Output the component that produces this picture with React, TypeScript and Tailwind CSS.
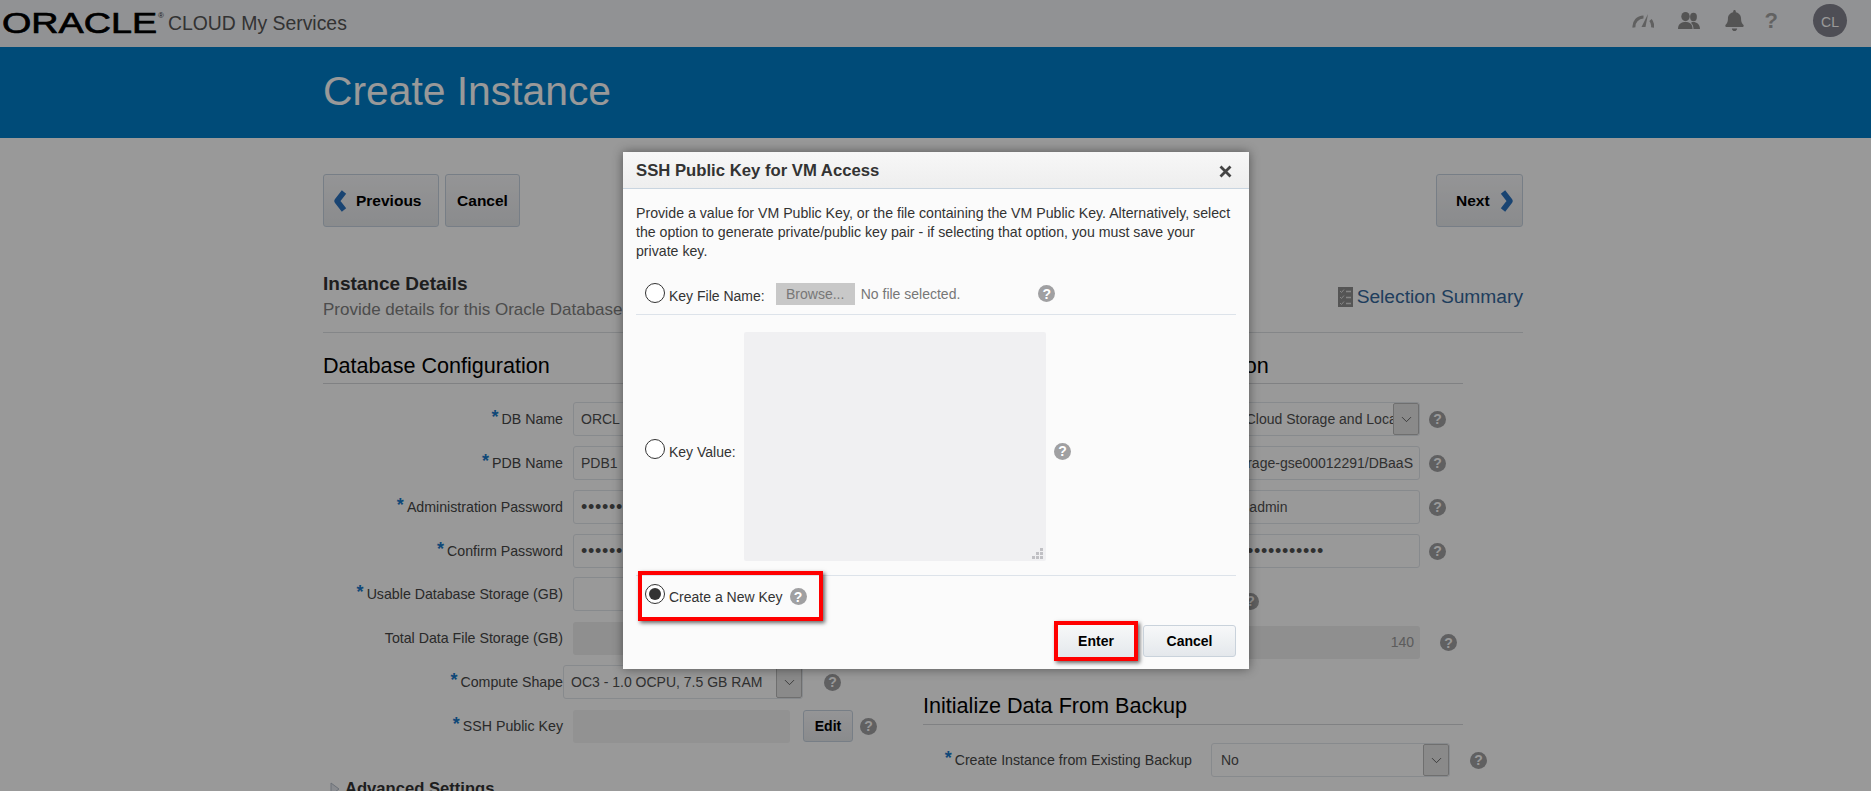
import { ChevronDown } from "lucide-react";
import { FaBell } from "react-icons/fa";
import type { ReactNode } from "react";

const Help = ({ className = "" }: { className?: string }) => (
  <span className={`flex h-[17px] w-[17px] shrink-0 items-center justify-center rounded-full bg-[#a0a0a2] text-[14px] font-bold leading-none text-white ${className}`}>
    ?
  </span>
);

const Chevron = ({ flip = false }: { flip?: boolean }) => (
  <svg width="14" height="22" viewBox="0 0 14 22" className={flip ? "rotate-180" : ""}>
    <path d="M11 2 L4 11 L11 20" fill="none" stroke="#2b72bf" strokeWidth="5.5" strokeLinejoin="round" />
  </svg>
);

const PageButton = ({ children, className = "" }: { children: ReactNode; className?: string }) => (
  <button className={`flex h-[53px] items-center rounded-[3px] border border-[#c7d3e0] bg-gradient-to-b from-[#f8f8fa] to-[#e6e8eb] text-[15.5px] font-bold text-black ${className}`}>
    {children}
  </button>
);

const Label = ({ text, required = true }: { text: string; required?: boolean }) => (
  <span className="whitespace-nowrap text-[14.2px] text-[#464646]">
    {required && <span className="mr-[3px] align-[1px] text-[18px] font-bold leading-none text-[#1a78c8]">*</span>}
    {text}
  </span>
);

const boxCls = "flex h-[34px] shrink-0 items-center overflow-hidden whitespace-nowrap rounded-[3px] border border-[#e2e6ec] text-[14px] text-[#505050]";
const dotCls = "text-[18px] tracking-[0.7px]";

const DropButton = () => (
  <span className="flex h-full w-[26px] shrink-0 items-center justify-center rounded-[2px] border border-[#b9b9b9] bg-[#e6e6e6]">
    <ChevronDown size={17} strokeWidth={1} color="#333" />
  </span>
);

const LeftRow = ({ label, required = true, className = "", children }: { label: string; required?: boolean; className?: string; children: ReactNode }) => (
  <div className={`flex h-[34px] items-center ${className}`}>
    <div className="w-[240px] shrink-0 text-right">
      <Label text={label} required={required} />
    </div>
    {children}
  </div>
);

export default function App() {
  return (
    <div className="relative h-[791px] overflow-hidden bg-white font-['Liberation_Sans',sans-serif]">
      {/* top bar */}
      <header className="flex h-[47px] items-center bg-[#f2f3f7] pr-[24px]">
        <span className="ml-[2px] inline-block w-[120px] origin-left scale-x-[1.3] text-[29px] font-normal leading-none text-black [-webkit-text-stroke:0.7px_black]">
          ORACLE
        </span>
        <span className="mb-[16px] ml-[36px] w-[6px] text-[8px] leading-none text-[#333]">®</span>
        <span className="ml-[4px] text-[19.4px] text-[#555]">CLOUD My Services</span>
        <div className="ml-auto flex items-center">
          <svg width="22" height="15" viewBox="0 0 22 15" className="mb-[6px]">
            <path d="M2 14.5 A9.5 9.5 0 0 1 11.5 4" fill="none" stroke="#a0a0a0" strokeWidth="3" />
            <path d="M18.5 7 A9.5 9.5 0 0 1 20.5 14.5" fill="none" stroke="#a0a0a0" strokeWidth="3" />
            <path d="M9.5 14 L16 1 L13.5 14 Z" fill="#a0a0a0" />
          </svg>
          <svg width="22" height="18" viewBox="0 0 22 18" className="mb-[6px] ml-[24px]" fill="#8c8c8c">
            <ellipse cx="15.5" cy="5" rx="3.4" ry="4.2" />
            <path d="M14 10 C18 9.5 22 11.5 22 17 H15.5 C15.5 14 14.5 12 13 11 Z" />
            <ellipse cx="7.5" cy="4.6" rx="4.2" ry="4.6" />
            <path d="M0 17 C0 11.5 4 10 7.5 10 C11 10 14.5 11.5 14.5 17 Z" />
          </svg>
          <FaBell size={21} color="#8c8c8c" className="mb-[6px] ml-[24px]" />
          <span className="mb-[6px] ml-[20px] text-[22px] font-bold leading-none text-[#a4a4a4]">?</span>
          <span className="ml-[35px] mb-[6px] flex h-[33px] w-[34px] items-center justify-center rounded-full bg-[#82828e] pt-[3px] text-[14px] text-white">
            CL
          </span>
        </div>
      </header>

      {/* blue title band */}
      <div className="flex h-[91px] items-center bg-[#007dc8] pb-[2px] pl-[323px]">
        <h1 className="text-[40.8px] font-normal leading-none text-white">Create Instance</h1>
      </div>

      {/* page body */}
      <main className="ml-[323px] w-[1200px] pt-[36px]">
        <div className="flex justify-between">
          <div className="flex gap-[6px]">
            <PageButton className="w-[116px] pl-[9px]">
              <Chevron />
              <span className="ml-[9px]">Previous</span>
            </PageButton>
            <PageButton className="w-[75px] justify-center">Cancel</PageButton>
          </div>
          <PageButton className="w-[87px] gap-[10px] pl-[19px]">
            <span>Next</span>
            <Chevron flip />
          </PageButton>
        </div>

        <div className="mt-[45px] flex h-[61px] items-start justify-between border-b border-[#dcdfe3]">
          <div>
            <h2 className="text-[19px] font-bold leading-[24px] text-[#333]">Instance Details</h2>
            <p className="mt-[3px] text-[17px] leading-[22px] text-[#808080]">
              Provide details for this Oracle Database Cloud Service instance.
            </p>
          </div>
          <div className="mt-[15px] flex items-center gap-[4px]">
            <svg width="15" height="20" viewBox="0 0 15 20">
              <rect width="15" height="20" fill="#8e8e8e" />
              <path d="M2 4 L3.5 5.5 L6 2.5 M2 10 L3.5 11.5 L6 8.5 M2 16 L3.5 17.5 L6 14.5" fill="none" stroke="#ddd" strokeWidth="1" />
              <path d="M8 4.5 H13 M8 10.5 H13 M8 16.5 H13" stroke="#ddd" strokeWidth="1.4" />
            </svg>
            <span className="text-[19.2px] leading-none text-[#35689c]">Selection Summary</span>
          </div>
        </div>

        <div className="flex gap-[60px]">
          {/* left column */}
          <section className="w-[540px]">
            <h3 className="mt-[16px] h-[35px] border-b border-[#d5d7da] text-[21.6px] leading-[34px] text-black">
              Database Configuration
            </h3>
            <div className="mt-[18px] flex flex-col gap-[10px]">
              <LeftRow label="DB Name">
                <div className={`${boxCls} ml-[10px] w-[217px] pl-[7px]`}>ORCL</div>
              </LeftRow>
              <LeftRow label="PDB Name">
                <div className={`${boxCls} ml-[10px] w-[217px] pl-[7px]`}>PDB1</div>
              </LeftRow>
              <LeftRow label="Administration Password">
                <div className={`${boxCls} ml-[10px] w-[217px] pl-[7px] ${dotCls}`}>{"•".repeat(20)}</div>
              </LeftRow>
              <LeftRow label="Confirm Password">
                <div className={`${boxCls} ml-[10px] w-[217px] pl-[7px] ${dotCls}`}>{"•".repeat(20)}</div>
              </LeftRow>
              <LeftRow label="Usable Database Storage (GB)" className="-mt-px">
                <div className={`${boxCls} ml-[10px] w-[217px]`} />
              </LeftRow>
              <LeftRow label="Total Data File Storage (GB)" required={false}>
                <div className="ml-[10px] h-[33px] w-[217px] shrink-0 rounded-[3px] bg-[#eeeeee]" />
              </LeftRow>
              <LeftRow label="Compute Shape">
                <div className={`${boxCls} w-[240px] justify-between pl-[7px]`}>
                  <span>OC3 - 1.0 OCPU, 7.5 GB RAM</span>
                  <DropButton />
                </div>
                <Help className="ml-[21px]" />
              </LeftRow>
              <LeftRow label="SSH Public Key">
                <div className="ml-[10px] h-[33px] w-[217px] shrink-0 rounded-[3px] bg-[#f3f3f3]" />
                <button className="ml-[13px] h-[32px] w-[50px] shrink-0 rounded-[3px] border border-[#c7d3e0] bg-gradient-to-b from-[#f8f8fa] to-[#e6e8eb] text-[14px] font-bold text-black">
                  Edit
                </button>
                <Help className="ml-[7px]" />
              </LeftRow>
            </div>
            <div className="mt-[34px] flex items-center">
              <svg width="12" height="14" viewBox="0 0 12 14" className="ml-[6px]">
                <path d="M2 1 L10 7 L2 13 Z" fill="#e4e8ee" stroke="#b4bcc8" />
              </svg>
              <span className="ml-[4px] text-[16.6px] font-bold text-[#333]">Advanced Settings</span>
            </div>
          </section>

          {/* right column */}
          <section className="w-[540px]">
            <h3 className="mt-[16px] h-[35px] border-b border-[#d5d7da] text-[21.6px] leading-[34px] text-black">
              Backup and Recovery Configuration
            </h3>
            <div className="mt-[18px] flex flex-col gap-[10px] pl-[288px]">
              <div className="flex items-center">
                <div className={`${boxCls} w-[209px] justify-between pl-[1px]`}>
                  <span className="overflow-hidden">Both Cloud Storage and Local Storage</span>
                  <DropButton />
                </div>
                <Help className="ml-[9px]" />
              </div>
              <div className="flex items-center">
                <div className={`${boxCls} w-[209px] justify-end pr-[6px]`}>Storage-gse00012291/DBaaS</div>
                <Help className="ml-[9px]" />
              </div>
              <div className="flex items-center">
                <div className={`${boxCls} w-[209px]`}>cloud.admin</div>
                <Help className="ml-[9px]" />
              </div>
              <div className="flex items-center">
                <div className={`${boxCls} w-[209px] pl-[7px] ${dotCls}`}>{"•".repeat(15)}</div>
                <Help className="ml-[9px]" />
              </div>
            </div>
            <div className="mt-[16px] flex h-[34px] items-center pl-[319px]">
              <Help />
            </div>
            <div className="mt-[8px] flex h-[33px] items-center pl-[288px]">
              <div className="flex h-full w-[209px] shrink-0 items-center justify-end rounded-[3px] bg-[#eeeeee] pr-[6px] text-[14px] text-[#999]">140</div>
              <Help className="ml-[20px]" />
            </div>
            <h3 className="mt-[30px] h-[36px] border-b border-[#d5d7da] text-[21.6px] leading-[34px] text-black">
              Initialize Data From Backup
            </h3>
            <div className="mt-[18px] flex h-[34px] items-center">
              <div className="w-[269px] shrink-0 text-right">
                <Label text="Create Instance from Existing Backup" />
              </div>
              <div className={`${boxCls} ml-[19px] w-[239px] justify-between pl-[9px]`}>
                <span>No</span>
                <DropButton />
              </div>
              <Help className="ml-[20px]" />
            </div>
          </section>
        </div>
      </main>

      {/* dimming layer */}
      <div className="absolute inset-0 bg-black/40" />

      {/* dialog */}
      <div className="absolute left-[623px] top-[152px] h-[517px] w-[626px] bg-[#fbfbfb] shadow-[0_0_10px_rgba(0,0,0,0.45)]">
        <div className="flex h-[37px] items-center justify-between border-b border-[#c9d5e0] bg-gradient-to-b from-[#f7f7f7] to-[#eeeeee] pl-[13px] pr-[17px] pt-[2px]">
          <h2 className="text-[16.7px] font-bold text-[#333]">SSH Public Key for VM Access</h2>
          <svg width="13" height="13" viewBox="0 0 13 13">
            <path d="M1.5 1.5 L11.5 11.5 M11.5 1.5 L1.5 11.5" stroke="#444" strokeWidth="2.8" />
          </svg>
        </div>
        <div className="px-[13px]">
          <p className="pt-[15px] text-[14.17px] leading-[19px] text-[#333]">
            Provide a value for VM Public Key, or the file containing the VM Public Key. Alternatively, select
            <br />
            the option to generate private/public key pair - if selecting that option, you must save your
            <br />
            private key.
          </p>

          <div className="mt-[20px] flex h-[34px] items-start border-b border-[#dde3ea]">
            <span className="ml-[9px] mt-[2px] h-[20px] w-[20px] rounded-full border border-[#333] bg-white" />
            <span className="ml-[4px] mt-[7px] text-[14px] leading-[16px] text-[#333]">Key File Name:</span>
            <span className="ml-[11px] mt-[2px] flex h-[22px] w-[79px] items-center justify-center bg-[#c8c8c8] text-[14px] text-[#777]">
              Browse...
            </span>
            <span className="ml-[6px] mt-[5px] text-[14px] leading-[16px] text-[#777]">No file selected.</span>
            <Help className="ml-[78px] mt-[4px]" />
          </div>

          <div className="flex items-center border-b border-[#dde3ea] pb-[14px] pt-[17px]">
            <span className="ml-[9px] mt-[5px] h-[20px] w-[20px] rounded-full border border-[#333] bg-white" />
            <span className="ml-[4px] mt-[11px] w-[75px] text-[14px] leading-[16px] text-[#333]">Key Value:</span>
            <div className="relative h-[229px] w-[302px] rounded-[2px] bg-[#f0f0f2]">
              <svg width="11" height="11" viewBox="0 0 11 11" className="absolute bottom-[2px] right-[3px]" fill="#c0c0c4">
                <rect x="8" y="0" width="3" height="3" />
                <rect x="4" y="4" width="3" height="3" />
                <rect x="8" y="4" width="3" height="3" />
                <rect x="0" y="8" width="3" height="3" />
                <rect x="4" y="8" width="3" height="3" />
                <rect x="8" y="8" width="3" height="3" />
              </svg>
            </div>
            <Help className="ml-[8px] mt-[9px]" />
          </div>

          <div className="flex h-[45px] items-start">
            <span className="ml-[9px] mt-[8px] flex h-[20px] w-[20px] items-center justify-center rounded-full border border-[#333] bg-white">
              <span className="h-[12px] w-[12px] rounded-full bg-[#333]" />
            </span>
            <span className="ml-[4px] mt-[13px] text-[14px] leading-[16px] text-[#333]">Create a New Key</span>
            <Help className="ml-[7px] mt-[12px]" />
          </div>

          <div className="flex h-[40px] items-center justify-end gap-[5px]">
            <div className="flex h-[40px] w-[84px] items-center justify-center border-[4px] border-[#ff0000] shadow-[2px_2px_4px_rgba(0,0,0,0.6)]">
              <button className="h-full w-full bg-gradient-to-b from-[#f7f8f9] to-[#e4e8ec] text-[14px] font-bold text-black">
                Enter
              </button>
            </div>
            <button className="h-[32px] w-[93px] rounded-[3px] border border-[#c9d2db] bg-gradient-to-b from-[#f7f8f9] to-[#e4e8ec] text-[14px] font-bold text-black">
              Cancel
            </button>
          </div>
        </div>

        {/* annotation around the third option */}
        <div className="absolute left-[15px] top-[419px] h-[50px] w-[185px] border-[4px] border-[#ff0000] shadow-[2px_2px_4px_rgba(0,0,0,0.6)]" />
      </div>
    </div>
  );
}
